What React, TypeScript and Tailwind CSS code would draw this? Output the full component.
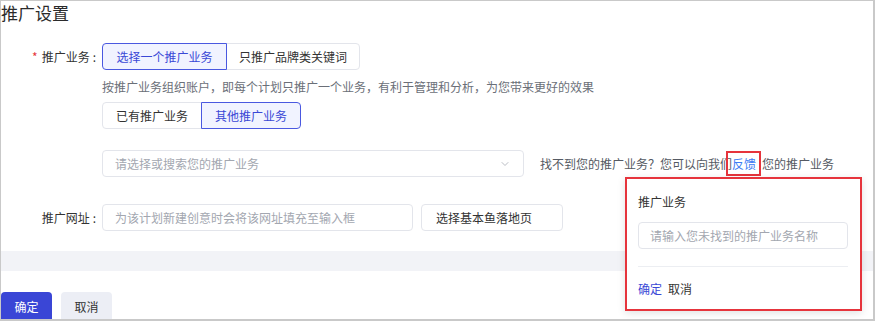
import { ChevronDown } from "lucide-react";

const FONT = "font-['Noto_Sans_CJK_SC','Noto_Sans',sans-serif]";

function Segment({ items, active, widths }: { items: string[]; active: number; widths: string[] }) {
  return (
    <div className="flex h-[27px]">
      {items.map((t, i) => (
        <div
          key={t}
          className={
            "flex items-center justify-center border text-[12px] " +
            widths[i] +
            (i === 0 ? " rounded-l-[4px]" : " -ml-px rounded-r-[4px]") +
            (i === active
              ? " relative z-10 border-[#4a58e0] bg-[#f1f3ff] text-[#3a48d6]"
              : " border-[#e3e5eb] bg-white text-[#333]")
          }
        >
          {t}
        </div>
      ))}
    </div>
  );
}

export default function App() {
  return (
    <div
      className={`${FONT} relative h-[321px] w-[875px] overflow-hidden border-b-2 border-l border-r-2 border-t border-[#c9c9c9] bg-white text-[#333]`}
    >
      <div className="text-[17px] leading-[24px] text-[#2b2b2b]">推广设置</div>

      {/* 推广业务 */}
      <div className="mt-[18px] flex h-[27px] items-center">
        <div className="w-[101px] pr-[6px] text-right text-[12px]">
          <span className="mr-[4px] text-[#e5383b]">*</span>推广业务<span className="pl-[3px]">:</span>
        </div>
        <Segment items={["选择一个推广业务", "只推广品牌类关键词"]} active={0} widths={["w-[125px]", "w-[134px]"]} />
      </div>

      <div className="mt-[7px] pl-[101px] text-[12px] leading-[20px] text-[#6b6f78]">
        按推广业务组织账户，即每个计划只推广一个业务，有利于管理和分析，为您带来更好的效果
      </div>

      <div className="mt-[5px] pl-[101px]">
        <Segment items={["已有推广业务", "其他推广业务"]} active={1} widths={["w-[100px]", "w-[100px]"]} />
      </div>

      <div className="mt-[21px] flex items-center pl-[101px]">
        <div className="flex h-[27px] w-[422px] items-center justify-between rounded-[4px] border border-[#e3e5eb] pl-[12px] pr-[12px] text-[12px] text-[#a3a7b0]">
          <span>请选择或搜索您的推广业务</span>
          <ChevronDown size={12} strokeWidth={1.5} className="text-[#a3a7b0]" />
        </div>
        <div className="ml-[16px] text-[12px] leading-[20px] text-[#555a63]">
          找不到您的推广业务？您可以向我们
          <span className="relative text-[#3d7cf4]">
            反馈
            <span className="absolute -bottom-[4px] -left-[6px] -right-[5px] -top-[4px] border-2 border-[#e6343c]" />
          </span>
          <span className="ml-[6px]">您的推广业务</span>
        </div>
      </div>

      {/* 推广网址 */}
      <div className="mt-[27px] flex h-[27px] items-center">
        <div className="w-[101px] pr-[6px] text-right text-[12px]">
          推广网址<span className="pl-[3px]">:</span>
        </div>
        <div className="flex h-[27px] w-[311px] items-center rounded-[4px] border border-[#e3e5eb] pl-[12px] text-[12px] text-[#a3a7b0]">
          为该计划新建创意时会将该网址填充至输入框
        </div>
        <div className="ml-[8px] flex h-[27px] w-[142px] items-center rounded-[4px] border border-[#e3e5eb] pl-[14px] text-[12px] text-[#333]">
          选择基本鱼落地页
        </div>
      </div>

      <div className="mt-[20px] h-[20px] bg-[#f2f3f7]" />

      <div className="mt-[21px] flex gap-[9px]">
        <div className="flex h-[30px] w-[51px] items-center justify-center rounded-[4px] bg-[#3a46d6] text-[12px] text-white">
          确定
        </div>
        <div className="flex h-[30px] w-[51px] items-center justify-center rounded-[4px] bg-[#eceef5] text-[12px] text-[#333]">
          取消
        </div>
      </div>

      {/* 反馈 popup */}
      <div className="absolute left-[624px] top-[176px] h-[134px] w-[237px] border-2 border-[#e6343c] bg-white px-[11px] pt-[13px] shadow-[0_2px_8px_rgba(0,0,0,0.12)]">
        <div className="text-[12px] leading-[20px] text-[#333]">推广业务</div>
        <div className="mt-[10px] flex h-[27px] w-[210px] items-center rounded-[4px] border border-[#e3e5eb] pl-[11px] text-[12px] text-[#a3a7b0]">
          请输入您未找到的推广业务名称
        </div>
        <div className="mt-[17px] h-px w-[210px] bg-[#eceef2]" />
        <div className="mt-[12px] flex gap-[6px] text-[12px] leading-[20px]">
          <span className="text-[#3a48d6]">确定</span>
          <span className="text-[#333]">取消</span>
        </div>
      </div>
    </div>
  );
}
